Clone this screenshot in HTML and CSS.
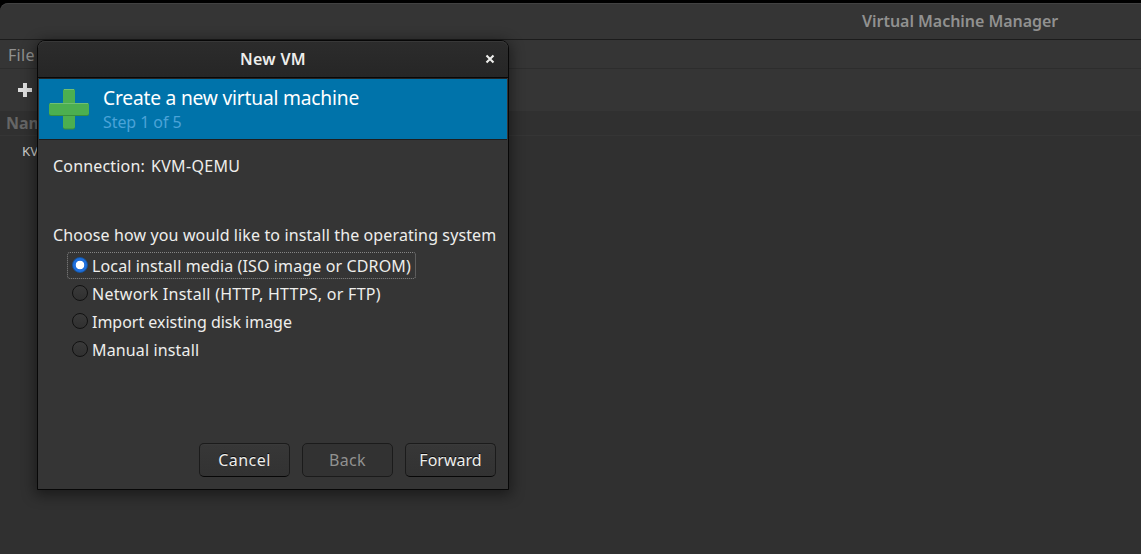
FILE: index.html
```html
<!DOCTYPE html>
<html lang="en">
<head>
<meta charset="utf-8">
<title>Virtual Machine Manager</title>
<link rel="stylesheet" href="styles.css">
</head>
<body>
<main class="manager">
  <header class="titlebar"><span class="app-title">Virtual Machine Manager</span></header>
  <nav class="menubar"><span class="menu-item">File</span></nav>
  <div class="toolbar">
    <svg class="add-icon" width="14" height="14" viewBox="0 0 14 14"><path d="M5 0h4v5h5v4H9v5H5V9H0V5h5z" fill="#dedede"/></svg>
  </div>
  <div class="list-head"><span class="col-name">Name</span></div>
  <div class="list"><span class="row-name">KV</span></div>
</main>
<section class="dialog">
  <header class="dialog-title">
    <span class="title-text">New VM</span>
    <svg class="close" width="10" height="10" viewBox="0 0 10 10"><path d="M1.500 1.500l7 7M8.500 1.500l-7 7" stroke="#eeeeec" stroke-width="2.100"/></svg>
  </header>
  <div class="banner">
    <svg class="plus" width="40" height="41" viewBox="0 0 40 41">
      <rect x="14" y="0" width="12" height="40.500" rx="2" fill="#388e3c"/>
      <rect x="14" y="0" width="12" height="39.500" rx="2" fill="#4caf50"/>
      <path d="M15 .5h10" stroke="#70bf73"/>
      <rect x="0" y="14" width="40" height="13" rx="2" fill="#388e3c"/>
      <rect x="0" y="14" width="40" height="12" rx="2" fill="#4caf50"/>
      <path d="M1 14.500h38" stroke="#70bf73"/>
    </svg>
    <div class="banner-text">
      <span class="heading">Create a new virtual machine</span>
      <span class="step">Step 1 of 5</span>
    </div>
  </div>
  <div class="content">
    <div class="connection"><span class="conn-label">Connection:</span><span class="conn-value">KVM-QEMU</span></div>
    <div class="question"><span class="question-text">Choose how you would like to install the operating system</span></div>
    <div class="options">
      <div class="option focused"><i class="radio checked"></i><span class="opt-1">Local install media (ISO image or CDROM)</span></div>
      <div class="option"><i class="radio"></i><span class="opt-2">Network Install (HTTP, HTTPS, or FTP)</span></div>
      <div class="option"><i class="radio"></i><span class="opt-3">Import existing disk image</span></div>
      <div class="option"><i class="radio"></i><span class="opt-4">Manual install</span></div>
    </div>
    <div class="actions">
      <button class="btn cancel"><span>Cancel</span></button>
      <button class="btn disabled" disabled><span>Back</span></button>
      <button class="btn"><span>Forward</span></button>
    </div>
  </div>
</section>
</body>
</html>
```
FILE: styles.css
```css
* { box-sizing: border-box; }
body {
  margin: 0;
  width: 1141px;
  height: 554px;
  padding-top: 3px;
  overflow: hidden;
  position: relative;
  background: #000;
  color: #eeeeec;
  font: 16px/24px "Noto Sans", sans-serif;
  white-space: nowrap;
}
.manager {
  width: 1141px;
  height: 551px;
  overflow: hidden;
  background: #303030;
  border-radius: 8px 0 0 0;
  display: flex;
  flex-direction: column;
}
.titlebar {
  height: 37px;
  flex: none;
  padding: 6px 0 0 862px;
  background: #353535;
  border-bottom: 1px solid #1c1c1c;
  box-shadow: inset 0 1px #424242;
  border-radius: 8px 0 0 0;
  color: #919190;
  font-weight: 600;
  letter-spacing: -.04px;
}
.menubar {
  height: 29px;
  flex: none;
  padding: 3px 8px;
  background: #353535;
  border-bottom: 1px solid #2d2d2d;
  color: #919190;
  letter-spacing: .3px;
}
.toolbar { height: 42px; flex: none; background: #353535; padding: 14px 18px; display: flex; }
.list-head {
  height: 25px;
  flex: none;
  padding-left: 6px;
  border-bottom: 1px solid #353535;
  color: #666;
  font-weight: 700;
}
.list { flex: 1; padding: 3px 22px; color: #cfcfcd; font-size: 13.300px; }
.dialog {
  position: absolute;
  left: 37px;
  top: 40px;
  width: 472px;
  height: 450px;
  border: 1px solid #070707;
  border-radius: 8px 8px 0 0;
  background: #353535;
  box-shadow: 0 3px 14px 2px rgba(0, 0, 0, .45);
  display: flex;
  flex-direction: column;
}
.dialog-title {
  height: 37px;
  flex: none;
  display: flex;
  justify-content: center;
  align-items: center;
  position: relative;
  background: linear-gradient(#2c2c2c, #262626);
  border-bottom: 1px solid #070707;
  border-radius: 7px 7px 0 0;
  box-shadow: inset 0 1px #383838;
  font-weight: 600;
  letter-spacing: .3px;
}
.close { position: absolute; right: 13px; top: 13px; }
.banner {
  height: 62px;
  flex: none;
  margin: 0 1px;
  border-top: 1px solid #242424;
  border-bottom: 1px solid #1e1e1e;
  background: #0073aa;
  display: flex;
  padding: 10px 10px 0;
  gap: 14px;
}
.plus { flex: none; }
.banner-text { display: flex; flex-direction: column; margin-top: -3px; }
.heading { color: #fff; font-size: 19.200px; line-height: 24px; letter-spacing: -.2px; }
.step { color: #4ba3d8; letter-spacing: -.08px; }
.content { flex: 1; display: flex; flex-direction: column; padding: 14px 12px 12px 15px; }
.connection { display: flex; gap: 6px; height: 69px; }
.conn-label { letter-spacing: .18px; }
.conn-value { letter-spacing: .3px; }
.question { height: 29px; }
.question-text { letter-spacing: .12px; }
.options { display: flex; flex-direction: column; padding-left: 14px; }
.option { height: 28px; padding: 2px 5px; display: flex; align-items: center; gap: 4px; width: 349px; }
.option.focused { height: 27px; padding: 1px 4px; margin-bottom: 1px; border: 1px dotted #858585; border-radius: 3px; }
.opt-1 { letter-spacing: .13px; }
.opt-2 { letter-spacing: .28px; }
.opt-3 { letter-spacing: -.02px; }
.opt-4 { letter-spacing: .14px; }
.radio {
  width: 16px;
  height: 16px;
  flex: none;
  margin-top: -2px;
  border: 1px solid #111;
  border-radius: 50%;
  background: linear-gradient(#3a3a3a, #303030);
}
.radio.checked { border-color: #15539e; background: radial-gradient(circle, #fff 0 4px, #1f6fdc 4.600px); }
.actions { display: flex; justify-content: flex-end; gap: 12px; margin-top: auto; }
.btn {
  width: 91px;
  height: 34px;
  padding: 0;
  border: 1px solid #1b1b1b;
  border-bottom-color: #070707;
  border-radius: 5px;
  background: linear-gradient(#373737, #323232);
  box-shadow: inset 0 1px rgba(255, 255, 255, .02);
  color: #eeeeec;
  font: inherit;
  text-shadow: 0 -1px rgba(0, 0, 0, .8);
}
.btn.cancel { letter-spacing: .45px; }
.btn.disabled {
  background: #323232;
  border-color: #1b1b1b;
  color: #919190;
  text-shadow: none;
  box-shadow: none;
  letter-spacing: .3px;
}
```
